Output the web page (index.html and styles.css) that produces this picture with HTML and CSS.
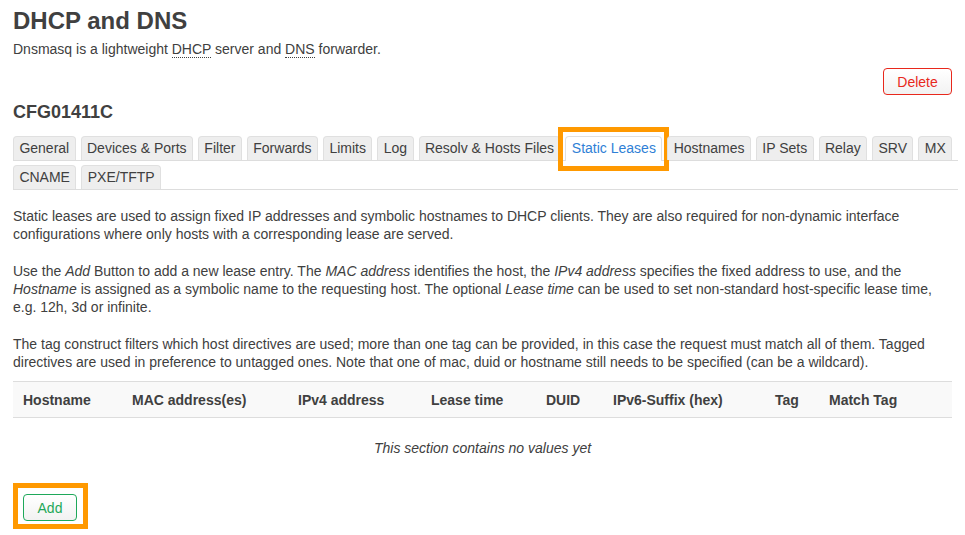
FILE: index.html
```html
<!DOCTYPE html>
<html lang="en">
<head>
<meta charset="utf-8">
<title>DHCP and DNS</title>
<link rel="stylesheet" href="styles.css">
</head>
<body>
<div class="page">
  <h1 class="title">DHCP and DNS</h1>
  <p class="subtitle">Dnsmasq is a lightweight <abbr title="Dynamic Host Configuration Protocol">DHCP</abbr> server and <abbr title="Domain Name System">DNS</abbr> forwarder.</p>

  <div class="actions">
    <button class="btn btn-negative" type="button">Delete</button>
  </div>

  <h3 class="section-title">CFG01411C</h3>

  <div class="tabs">
    <ul class="tab-row">
      <li class="tab">General</li>
      <li class="tab">Devices &amp; Ports</li>
      <li class="tab">Filter</li>
      <li class="tab">Forwards</li>
      <li class="tab">Limits</li>
      <li class="tab">Log</li>
      <li class="tab">Resolv &amp; Hosts Files</li>
      <li class="tab tab-active">Static Leases<span class="highlight highlight-tab"></span></li>
      <li class="tab">Hostnames</li>
      <li class="tab">IP Sets</li>
      <li class="tab">Relay</li>
      <li class="tab">SRV</li>
      <li class="tab">MX</li>
    </ul>
    <ul class="tab-row tab-row-2">
      <li class="tab">CNAME</li>
      <li class="tab">PXE/TFTP</li>
    </ul>
  </div>

  <div class="description">
    <p>Static leases are used to assign fixed IP addresses and symbolic hostnames to DHCP clients. They are also required for non-dynamic interface configurations where only hosts with a corresponding lease are served.</p>
    <p>Use the <em>Add</em> Button to add a new lease entry. The <em>MAC address</em> identifies the host, the <em>IPv4 address</em> specifies the fixed address to use, and the <em>Hostname</em> is assigned as a symbolic name to the requesting host. The optional <em>Lease time</em> can be used to set non-standard host-specific lease time, e.g. 12h, 3d or infinite.</p>
    <p>The tag construct filters which host directives are used; more than one tag can be provided, in this case the request must match all of them. Tagged directives are used in preference to untagged ones. Note that one of mac, duid or hostname still needs to be specified (can be a wildcard).</p>
  </div>

  <table class="leases">
    <colgroup>
      <col class="c-host">
      <col class="c-mac">
      <col class="c-ipv4">
      <col class="c-lease">
      <col class="c-duid">
      <col class="c-ipv6">
      <col class="c-tag">
      <col class="c-match">
    </colgroup>
    <thead>
      <tr>
        <th>Hostname</th>
        <th>MAC address(es)</th>
        <th>IPv4 address</th>
        <th>Lease time</th>
        <th>DUID</th>
        <th>IPv6-Suffix (hex)</th>
        <th>Tag</th>
        <th>Match Tag</th>
      </tr>
    </thead>
    <tbody>
      <tr>
        <td class="empty" colspan="8">This section contains no values yet</td>
      </tr>
    </tbody>
  </table>

  <div class="add-wrap">
    <button class="btn btn-add" type="button">Add</button>
  </div>
</div>
</body>
</html>
```

FILE: styles.css
```css
* {
  box-sizing: border-box;
}

html, body {
  margin: 0;
  padding: 0;
  background: #fff;
}

body {
  font-family: "Liberation Sans", Arial, sans-serif;
  font-size: 14px;
  line-height: 18px;
  color: #404040;
}

.page {
  padding: 6px 13px 0 13px;
}

.title {
  margin: 0;
  font-size: 24px;
  line-height: 30px;
  font-weight: bold;
  color: #404040;
}

.subtitle {
  margin: 4px 0 0 0;
  line-height: 18px;
}

abbr {
  text-decoration: none;
  border-bottom: 1px dotted #404040;
}

.actions {
  display: flex;
  justify-content: flex-end;
  margin-top: 10px;
}

.btn {
  font-family: "Liberation Sans", Arial, sans-serif;
  font-size: 14px;
  line-height: 18px;
  height: 27px;
  padding: 3px 12px;
  border-radius: 4px;
  background: linear-gradient(#ffffff, #f2f2f2);
  cursor: pointer;
}

.btn-negative {
  width: 69px;
  color: #e8281c;
  border: 1px solid #e8281c;
}

.section-title {
  margin: 6px 0 0 0;
  font-size: 18px;
  line-height: 22px;
  font-weight: bold;
  color: #404040;
}

.tabs {
  margin-top: 13px;
  margin-right: -6px;
}

.tab-row {
  list-style: none;
  margin: 0;
  padding: 0;
  display: flex;
  gap: 5px;
  border-bottom: 1px solid #dddddd;
}

.tab-row-2 {
  margin-top: 4px;
}

.tab {
  position: relative;
  height: 24px;
  line-height: 22px;
  padding: 0 5.4px;
  background: #eeeeee;
  border: 1px solid #e0e0e0;
  border-bottom: none;
  border-radius: 4px 4px 0 0;
  white-space: nowrap;
  color: #404040;
}

.tab-active {
  background: #ffffff;
  color: #2f7fd6;
  height: 25px;
  margin-bottom: -1px;
}

.highlight {
  position: absolute;
  border: 5px solid #ff9900;
  pointer-events: none;
}

.highlight-tab {
  left: -8px;
  right: -8px;
  top: -10px;
  bottom: -10px;
}

.description {
  margin-top: 17px;
}

.description p {
  margin: 0 0 19px 0;
}

.description p:last-child {
  margin-bottom: 0;
}

.leases {
  width: 939px;
  margin-top: 10px;
  border-collapse: collapse;
  table-layout: fixed;
}

.c-host { width: 109px; }
.c-mac { width: 166px; }
.c-ipv4 { width: 133px; }
.c-lease { width: 115px; }
.c-duid { width: 67px; }
.c-ipv6 { width: 162px; }
.c-tag { width: 54px; }
.c-match { width: 133px; }

.leases thead tr {
  background: #f9f9f9;
  border-top: 1px solid #dddddd;
  border-bottom: 1px solid #dddddd;
}

.leases th {
  text-align: left;
  font-weight: bold;
  padding: 8px 10px 8px 10px;
  height: 36px;
  white-space: nowrap;
}

.leases td.empty {
  text-align: center;
  font-style: italic;
  padding: 21px 10px 19px 10px;
}

.add-wrap {
  display: inline-block;
  margin-top: 7px;
  padding: 6px 6px 3px 5px;
  border: 5px solid #ff9900;
}

.btn-add {
  display: block;
  width: 54px;
  padding: 3px 0;
  color: #1ea85a;
  border: 1px solid #1ea85a;
}
```
